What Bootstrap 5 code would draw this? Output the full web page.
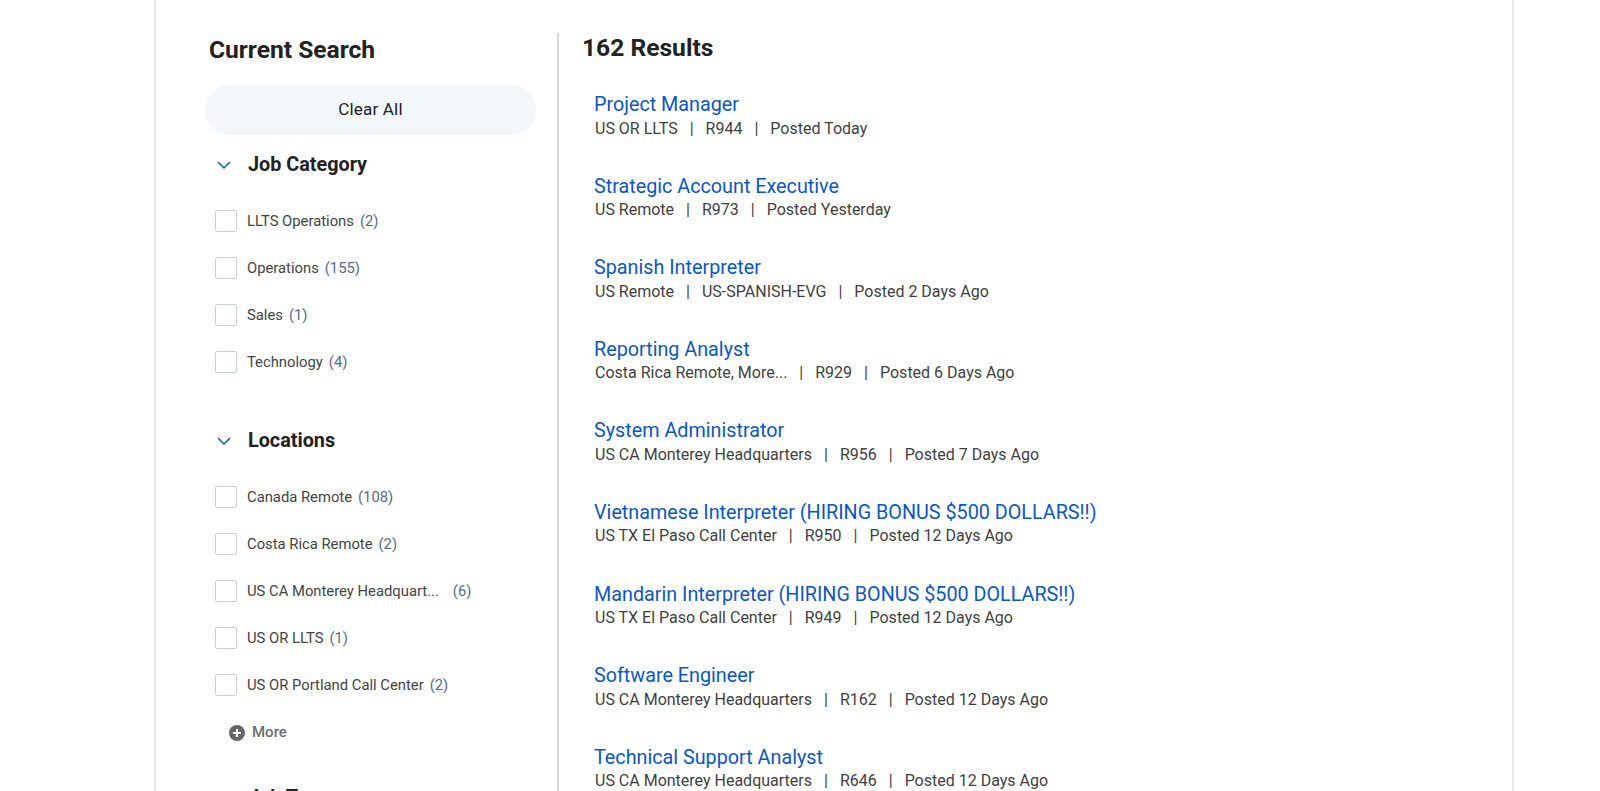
<!doctype html>
<html lang="en"><head><meta charset="utf-8">
<link href="https://cdn.jsdelivr.net/npm/bootstrap@5.3.0/dist/css/bootstrap.min.css" rel="stylesheet">
<style>
html,body{height:791px;overflow:hidden;background:#fff}
body{font-family:Roboto,"Liberation Sans",sans-serif;color:#333}
.frame{margin:0 86px 0 154px;height:791px;border-left:2px solid #e6e8ea;border-right:2px solid #e6e8ea;overflow:hidden}
.side{width:352px;flex:none;margin-left:49px;padding-top:33px}
.side-title{font-size:24.6px;font-weight:700;line-height:34px;color:#222;margin:0 0 18px 4px}
.clear-btn{height:50px;width:331px;border-radius:25px;background:#f4f7fa;border:0;font-size:17px;font-weight:400;letter-spacing:.2px;color:#222}
.facet-head{font-size:19.8px;font-weight:700;color:#222;line-height:30px;gap:16px;padding-left:11px;margin:15px 0 0}
.facet-head.locs{margin-top:40px}
.facet-head.third{margin-top:27px}
.facet-list{margin:18px 0 0;padding:0;list-style:none}
.facet-row{height:47px;padding-left:10px;gap:10px;font-size:14.8px;color:#444}
.box{width:22px;height:22px;border:1px solid #c8d0da;border-radius:2px;flex:none;margin-top:-1px}
.cnt{color:#5e6a85;margin-left:6px}
.cnt.wide-cnt{margin-left:14px}
.more-row{height:47px;padding-left:24px;gap:7px;font-size:15px;font-weight:500;color:#6f6f6f}
.results{flex:1;border-left:2px solid #d9d9d9;margin-top:33px;padding-left:23px}
.res-title{font-size:24.6px;font-weight:700;line-height:30px;color:#222;margin:0 0 28px}
.job{height:81.6px;padding-left:12px}
.job a{display:block;font-size:19.75px;line-height:27.5px;color:#0b57c2;text-decoration:none}
.meta{font-size:16px;line-height:20px;color:#3f3f3f;padding-left:1px}
.meta i{font-style:normal;margin:0 12px}
</style></head><body>
<div class="frame d-flex">
<aside class="side">
<h2 class="side-title">Current Search</h2>
<button class="clear-btn d-block">Clear All</button>
<h3 class="facet-head d-flex align-items-center">
<svg width="16" height="10" viewBox="0 0 16 10"><path d="M2 2l6 6 6-6" fill="none" stroke="#0b57c2" stroke-width="1.5"/></svg>Job Category</h3>
<ul class="facet-list">
<li class="facet-row d-flex align-items-center"><span class="box"></span><span>LLTS Operations<span class="cnt">(2)</span></span></li>
<li class="facet-row d-flex align-items-center"><span class="box"></span><span>Operations<span class="cnt">(155)</span></span></li>
<li class="facet-row d-flex align-items-center"><span class="box"></span><span>Sales<span class="cnt">(1)</span></span></li>
<li class="facet-row d-flex align-items-center"><span class="box"></span><span>Technology<span class="cnt">(4)</span></span></li>
</ul>
<h3 class="facet-head locs d-flex align-items-center">
<svg width="16" height="10" viewBox="0 0 16 10"><path d="M2 2l6 6 6-6" fill="none" stroke="#0b57c2" stroke-width="1.5"/></svg>Locations</h3>
<ul class="facet-list">
<li class="facet-row d-flex align-items-center"><span class="box"></span><span>Canada Remote<span class="cnt">(108)</span></span></li>
<li class="facet-row d-flex align-items-center"><span class="box"></span><span>Costa Rica Remote<span class="cnt">(2)</span></span></li>
<li class="facet-row d-flex align-items-center"><span class="box"></span><span>US CA Monterey Headquart...<span class="cnt wide-cnt">(6)</span></span></li>
<li class="facet-row d-flex align-items-center"><span class="box"></span><span>US OR LLTS<span class="cnt">(1)</span></span></li>
<li class="facet-row d-flex align-items-center"><span class="box"></span><span>US OR Portland Call Center<span class="cnt">(2)</span></span></li>
<li class="more-row d-flex align-items-center"><svg width="16" height="16" viewBox="0 0 16 16"><circle cx="8" cy="8" r="8" fill="#666"/><path d="M8 4v8M4 8h8" stroke="#fff" stroke-width="2"/></svg>More</li>
</ul>
<h3 class="facet-head third d-flex align-items-center">
<svg width="16" height="10" viewBox="0 0 16 10"><path d="M2 2l6 6 6-6" fill="none" stroke="#0b57c2" stroke-width="1.5"/></svg>Job Type</h3>
</aside>
<main class="results">
<h2 class="res-title">162 Results</h2>
<div class="job"><a href="#">Project Manager</a><div class="meta">US OR LLTS<i>|</i>R944<i>|</i>Posted Today</div></div>
<div class="job"><a href="#">Strategic Account Executive</a><div class="meta">US Remote<i>|</i>R973<i>|</i>Posted Yesterday</div></div>
<div class="job"><a href="#">Spanish Interpreter</a><div class="meta">US Remote<i>|</i>US-SPANISH-EVG<i>|</i>Posted 2 Days Ago</div></div>
<div class="job"><a href="#">Reporting Analyst</a><div class="meta">Costa Rica Remote, More...<i>|</i>R929<i>|</i>Posted 6 Days Ago</div></div>
<div class="job"><a href="#">System Administrator</a><div class="meta">US CA Monterey Headquarters<i>|</i>R956<i>|</i>Posted 7 Days Ago</div></div>
<div class="job"><a href="#">Vietnamese Interpreter (HIRING BONUS $500 DOLLARS!!)</a><div class="meta">US TX El Paso Call Center<i>|</i>R950<i>|</i>Posted 12 Days Ago</div></div>
<div class="job"><a href="#">Mandarin Interpreter (HIRING BONUS $500 DOLLARS!!)</a><div class="meta">US TX El Paso Call Center<i>|</i>R949<i>|</i>Posted 12 Days Ago</div></div>
<div class="job"><a href="#">Software Engineer</a><div class="meta">US CA Monterey Headquarters<i>|</i>R162<i>|</i>Posted 12 Days Ago</div></div>
<div class="job"><a href="#">Technical Support Analyst</a><div class="meta">US CA Monterey Headquarters<i>|</i>R646<i>|</i>Posted 12 Days Ago</div></div>
</main>
</div>
<script src="https://cdn.jsdelivr.net/npm/bootstrap@5.3.0/dist/js/bootstrap.bundle.min.js"></script>
</body></html>
